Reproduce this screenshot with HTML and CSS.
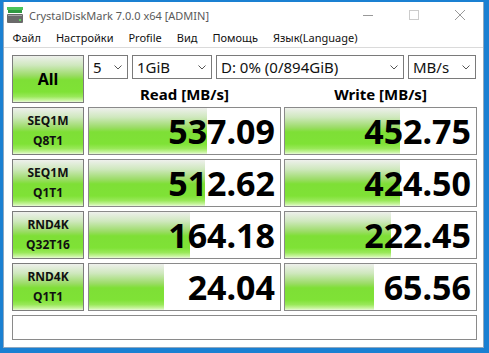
FILE: index.html
```html
<!DOCTYPE html>
<html lang="ru">

<head>
  <meta charset="UTF-8" />
  <title>CrystalDiskMark 7.0.0 x64 [ADMIN]</title>
  <link rel="stylesheet" href="styles.css">
</head>

<body>
  <div class="window">
    <div class="titlebar">
      <svg class="app-icon" width="16" height="16" viewBox="0 0 16 16">
        <rect x="0" y="0" width="16" height="3" fill="#4cc45a" />
        <rect x="1" y="3" width="14" height="3" fill="#2f9940" />
        <rect x="0" y="7" width="16" height="9" rx="1" fill="#6a6a6a" />
        <rect x="1" y="8" width="14" height="1" fill="#a4a4a4" />
        <rect x="12" y="12" width="2" height="2" fill="#5ad65a" />
      </svg>
      <span class="title">CrystalDiskMark 7.0.0 x64 [ADMIN]</span>
      <div class="controls">
        <span class="ctl">
          <svg width="10" height="10" viewBox="0 0 10 10"><path d="M0 5.5h10" stroke="#999" stroke-width="1" /></svg>
        </span>
        <span class="ctl">
          <svg width="10" height="10" viewBox="0 0 10 10"><rect x="0.5" y="0.5" width="9" height="9" fill="none" stroke="#ccc" stroke-width="1" /></svg>
        </span>
        <span class="ctl">
          <svg width="10" height="10" viewBox="0 0 10 10"><path d="M0 0L10 10M10 0L0 10" stroke="#999" stroke-width="1" /></svg>
        </span>
      </div>
    </div>

    <div class="menubar">
      <span>Файл</span>
      <span>Настройки</span>
      <span>Profile</span>
      <span>Вид</span>
      <span>Помощь</span>
      <span>Язык(Language)</span>
    </div>

    <div class="client">
      <div class="top">
        <div class="btn all">All</div>
        <div class="top-right">
          <div class="combos">
            <div class="combo c-count">5<svg class="chev" width="8" height="5" viewBox="0 0 8 5"><path d="M0.5 0.5L4 4L7.5 0.5" fill="none" stroke="#555" /></svg></div>
            <div class="combo c-size">1GiB<svg class="chev" width="8" height="5" viewBox="0 0 8 5"><path d="M0.5 0.5L4 4L7.5 0.5" fill="none" stroke="#555" /></svg></div>
            <div class="combo c-drive">D: 0% (0/894GiB)<svg class="chev" width="8" height="5" viewBox="0 0 8 5"><path d="M0.5 0.5L4 4L7.5 0.5" fill="none" stroke="#555" /></svg></div>
            <div class="combo c-unit">MB/s<svg class="chev" width="8" height="5" viewBox="0 0 8 5"><path d="M0.5 0.5L4 4L7.5 0.5" fill="none" stroke="#555" /></svg></div>
          </div>
          <div class="heads">
            <div>Read [MB/s]</div>
            <div>Write [MB/s]</div>
          </div>
        </div>
      </div>

      <div class="row">
        <div class="btn label">SEQ1M<br>Q8T1</div>
        <div class="meter" style="background-size: 118px 100%">537.09</div>
        <div class="meter" style="background-size: 115px 100%">452.75</div>
      </div>
      <div class="row">
        <div class="btn label">SEQ1M<br>Q1T1</div>
        <div class="meter" style="background-size: 116px 100%">512.62</div>
        <div class="meter" style="background-size: 115px 100%">424.50</div>
      </div>
      <div class="row">
        <div class="btn label">RND4K<br>Q32T16</div>
        <div class="meter" style="background-size: 101px 100%">164.18</div>
        <div class="meter" style="background-size: 106px 100%">222.45</div>
      </div>
      <div class="row">
        <div class="btn label">RND4K<br>Q1T1</div>
        <div class="meter" style="background-size: 75px 100%">24.04</div>
        <div class="meter" style="background-size: 89px 100%">65.56</div>
      </div>

      <div class="comment"></div>
    </div>
  </div>
</body>

</html>
```

FILE: styles.css
```css
* {
  box-sizing: border-box;
}

html,
body {
  margin: 0;
  padding: 0;
  font-family: 'Noto Sans', sans-serif;
  color: #000;
}

body {
  width: 489px;
  height: 353px;
  background-color: #1a80d2;
  overflow: hidden;
}

.window {
  margin: 2px 5px 0 3px;
  height: 346px;
  background-color: #fff;
  border: 1px solid #8fa8c0;
  border-top: none;
}

/* Barra del titolo */
.titlebar {
  height: 26px;
  display: flex;
  align-items: center;
  padding-left: 3px;
}

.app-icon {
  flex: none;
}

.title {
  margin-left: 6px;
  font-size: 11px;
  color: #5a5a5a;
}

.controls {
  margin-left: auto;
  display: flex;
  height: 100%;
}

.ctl {
  width: 46px;
  display: flex;
  align-items: center;
  justify-content: center;
}

/* Menu */
.menubar {
  height: 20px;
  display: flex;
  align-items: center;
  padding-left: 1px;
  font-size: 11px;
  color: #111;
  border-bottom: 1px solid #dadada;
}

.menubar span {
  padding: 0 7.5px;
}

.client {
  padding: 7px 6px 0 8px;
}

/* Pulsanti verdi */
.btn {
  border: 1px solid #7c7c7c;
  background: linear-gradient(to bottom,
      #eef0ec 0%,
      #cfe8be 20%,
      #9cdc68 42%,
      #7edf36 52%,
      #7fe236 78%,
      #98e858 88%,
      #c8f49e 96%,
      #e8fad8 100%);
  display: flex;
  align-items: center;
  justify-content: center;
  text-align: center;
  font-weight: bold;
}

.top {
  display: flex;
  height: 48px;
}

.all {
  width: 72px;
  font-size: 16px;
}

.top-right {
  margin-left: 4px;
  width: 389px;
  display: flex;
  flex-direction: column;
}

.combos {
  display: flex;
  gap: 4px;
  height: 25px;
}

.combo {
  border: 1px solid #7a7a7a;
  display: flex;
  align-items: center;
  padding: 0 5px 0 4px;
  font-size: 15px;
  color: #111;
}

.chev {
  margin-left: auto;
  flex: none;
}

.c-count {
  width: 40px;
}

.c-size {
  width: 80px;
}

.c-drive {
  width: 188px;
}

.c-unit {
  width: 68px;
}

.heads {
  display: flex;
  gap: 3px;
  padding-top: 6px;
  font-size: 15px;
  font-weight: bold;
  line-height: 18px;
}

.heads div {
  width: 193px;
  text-align: center;
}

/* Righe dei risultati */
.row {
  display: flex;
  height: 48px;
  margin-top: 4px;
}

.label {
  width: 72px;
  margin-right: 4px;
  font-size: 12px;
  line-height: 20px;
  color: #111;
}

.meter {
  width: 193px;
  border: 1px solid #8a8a8a;
  background-color: #fff;
  background-image: linear-gradient(to bottom,
      #eef0ec 0%,
      #cfe8be 20%,
      #9cdc68 42%,
      #7edf36 52%,
      #7fe236 78%,
      #98e858 88%,
      #c8f49e 96%,
      #e8fad8 100%);
  background-repeat: no-repeat;
  display: flex;
  align-items: center;
  justify-content: flex-end;
  padding-right: 5px;
  font-size: 34px;
  font-weight: bold;
}

.meter + .meter {
  margin-left: 3px;
}

.comment {
  margin-top: 4px;
  height: 25px;
  border: 1px solid #8a8a8a;
}
```
